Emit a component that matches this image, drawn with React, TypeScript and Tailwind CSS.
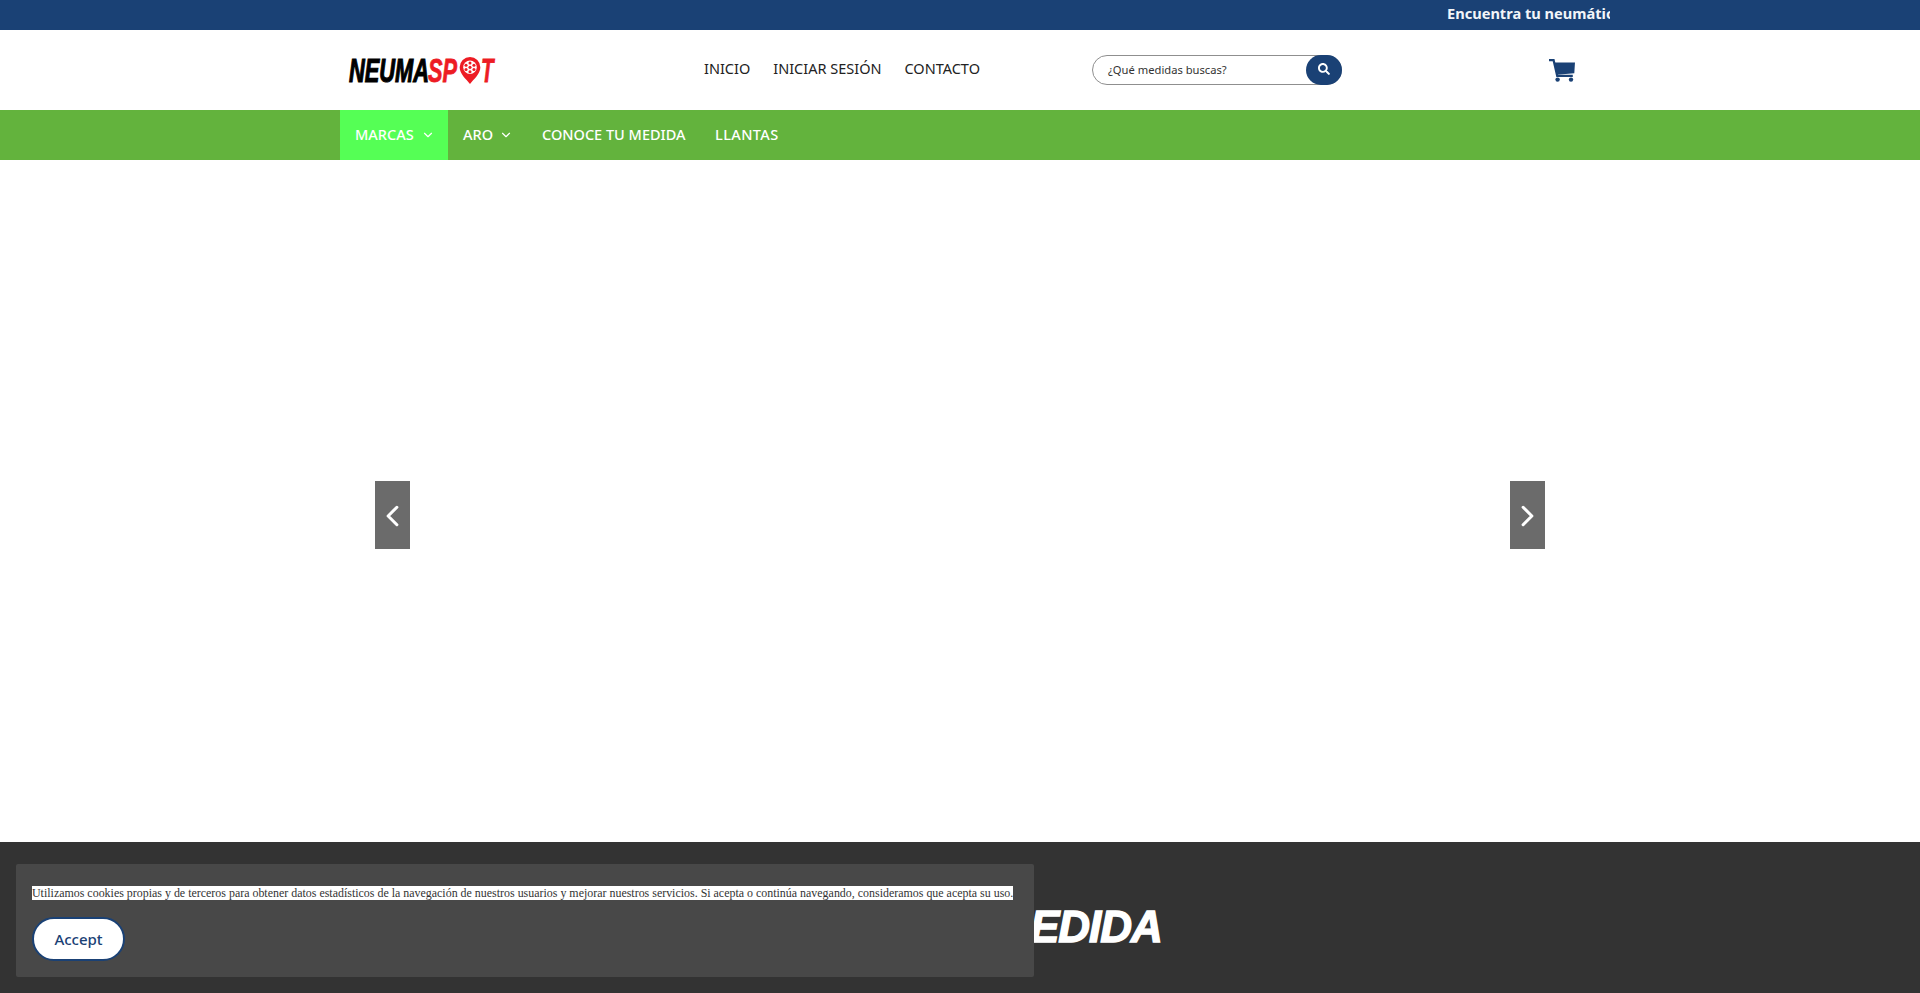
import { FaSearch } from "react-icons/fa";
import { ChevronDown, ChevronLeft, ChevronRight } from "lucide-react";

const font = "font-['Noto_Sans',sans-serif]";

function Logo() {
  return (
    <div className="flex h-[28px] w-[146px] items-center whitespace-nowrap font-['Liberation_Sans',sans-serif] text-[33px] leading-none font-bold italic">
      <div className="w-[79px]">
        <span className="inline-block origin-left scale-x-[0.66] text-black [-webkit-text-stroke:1.2px_#000]">NEUMA</span>
      </div>
      <div className="w-[32px]">
        <span className="inline-block origin-left scale-x-[0.66] text-[#ed1c24] [-webkit-text-stroke:0.8px_#ed1c24]">SP</span>
      </div>
      <svg viewBox="0 0 24 30" className="-ml-[1px] h-[27px] w-[22px] shrink-0">
        <path d="M12 0a11.5 11.5 0 0 1 11.5 11.5C23.5 19 16 25 12 30 8 25 .5 19 .5 11.5A11.5 11.5 0 0 1 12 0z" fill="#ed1c24" />
        <circle cx="12" cy="11.5" r="7.5" fill="#fff" />
        <circle cx="12" cy="11.5" r="1.7" fill="#ed1c24" />
        <circle cx="12" cy="6.7" r="1.7" fill="#ed1c24" />
        <circle cx="12" cy="16.3" r="1.7" fill="#ed1c24" />
        <circle cx="7.6" cy="9.2" r="1.7" fill="#ed1c24" />
        <circle cx="16.4" cy="9.2" r="1.7" fill="#ed1c24" />
        <circle cx="7.6" cy="13.8" r="1.7" fill="#ed1c24" />
        <circle cx="16.4" cy="13.8" r="1.7" fill="#ed1c24" />
      </svg>
      <div className="w-[13px]">
        <span className="inline-block origin-left scale-x-[0.62] text-[#ed1c24] [-webkit-text-stroke:0.8px_#ed1c24]">T</span>
      </div>
    </div>
  );
}

function Cart() {
  return (
    <svg viewBox="0 0 26 23" className="ml-[207px] h-[23px] w-[26px] text-[#1a4175]">
      <path d="M0 1.2h4.6l3.6 15.6h15.6" fill="none" stroke="currentColor" strokeWidth="2.2" />
      <path d="M5.4 3.6H26l-.7 10.6-17.2 1.6z" fill="currentColor" />
      <circle cx="8.6" cy="20.6" r="2.2" fill="currentColor" />
      <circle cx="22" cy="20.6" r="2.2" fill="currentColor" />
    </svg>
  );
}

export default function App() {
  return (
    <div className={`relative h-[993px] overflow-hidden bg-white ${font}`}>
      <div className="flex h-[30px] justify-end bg-[#1a4175] pr-[310px]">
        <div className="w-[163px] overflow-hidden whitespace-nowrap text-[14.6px] leading-[27px] font-bold text-[#f2f5f9]">
          Encuentra tu neumático ideal
        </div>
      </div>

      <header className="flex h-[80px] items-center pl-[349px]">
        <Logo />
        <nav className="mb-[2px] ml-[209px] flex w-[276px] justify-between text-[14.5px] text-[#222]">
          <span>INICIO</span>
          <span>INICIAR SESIÓN</span>
          <span>CONTACTO</span>
        </nav>
        <div className="ml-[112px] flex h-[30px] w-[250px] items-center justify-between rounded-full border border-[#8f8f8f] pl-[15px] text-[11.2px] text-[#333]">
          <span>¿Qué medidas buscas?</span>
          <span className="-my-px -mr-px flex h-[30px] w-[36px] items-center justify-center rounded-full bg-[#1a4175] text-white">
            <FaSearch className="mb-[2px] h-[12px] w-[12px]" />
          </span>
        </div>
        <Cart />
      </header>

      <div className="flex h-[50px] items-center whitespace-nowrap bg-[#63b33d] pl-[340px] text-[14.5px] font-medium text-white">
        <div className="flex h-full w-[108px] items-center gap-[7px] bg-[#55ff55] pl-[15px]">
          MARCAS <ChevronDown className="h-[14px] w-[14px]" />
        </div>
        <div className="flex h-full w-[79px] items-center gap-[6px] pl-[15px]">
          ARO <ChevronDown className="h-[14px] w-[14px]" />
        </div>
        <div className="w-[173px] pl-[15px]">CONOCE TU MEDIDA</div>
        <div className="pl-[15px] tracking-[0.4px]">LLANTAS</div>
      </div>

      <section className="flex h-[682px] items-center justify-between px-[375px] pt-[28px]">
        <button className="flex h-[68px] w-[35px] items-center justify-center bg-[#6b6b6b] text-white">
          <ChevronLeft className="mt-[2px] h-[40px] w-[40px]" strokeWidth={2.1} />
        </button>
        <button className="flex h-[68px] w-[35px] items-center justify-center bg-[#6b6b6b] text-white">
          <ChevronRight className="mt-[2px] h-[40px] w-[40px]" strokeWidth={2.1} />
        </button>
      </section>

      <section className="flex h-[151px] items-center justify-center bg-[#333] pt-[19px] pr-[30px]">
        <h2 className="font-['Liberation_Sans',sans-serif] text-[44px] font-bold italic tracking-[-1px] text-white [-webkit-text-stroke:1.4px_#fff]">
          CONOCE TU MEDIDA
        </h2>
      </section>

      <div className="absolute top-[864px] left-[16px] h-[113px] w-[1018px] rounded-[2px] bg-[#484848] px-[16px] pt-[22px]">
        <p className="whitespace-nowrap font-['Liberation_Serif',serif] text-[11.95px] leading-[14px] text-[#333]">
          <span className="bg-white">
            Utilizamos cookies propias y de terceros para obtener datos estadísticos de la navegación de nuestros usuarios y mejorar nuestros servicios. Si acepta o continúa navegando, consideramos que acepta su uso.
          </span>
        </p>
        <button className="mt-[17px] h-[44px] w-[93px] rounded-full border-2 border-[#1a4175] bg-white text-[15px] font-medium text-[#1a4175]">
          Accept
        </button>
      </div>
    </div>
  );
}
